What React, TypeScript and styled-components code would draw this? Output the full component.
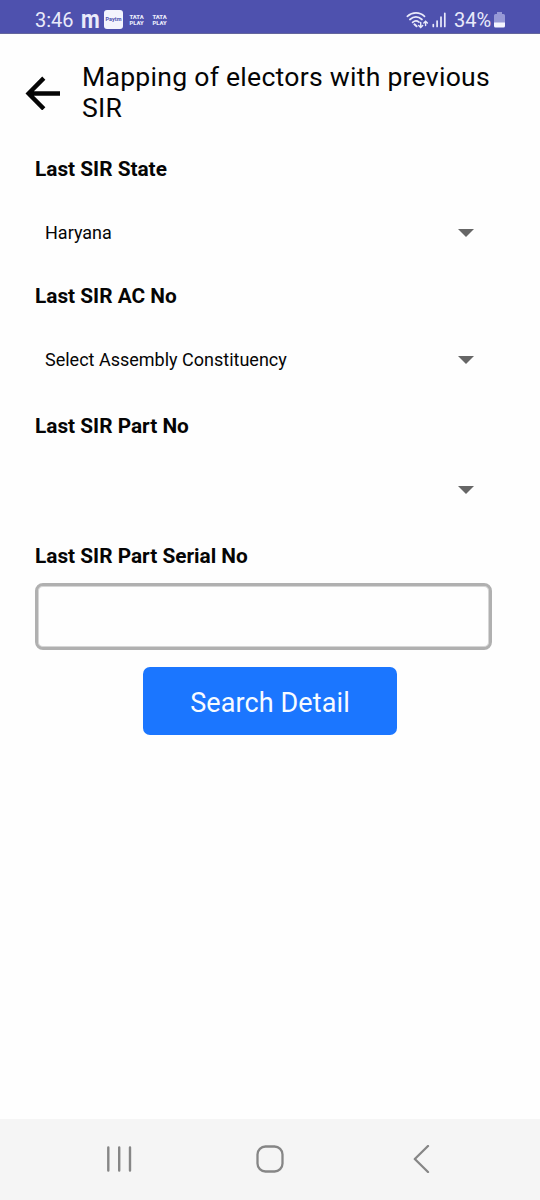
import React from "react";
import styled, { createGlobalStyle } from "styled-components";

const GlobalStyle = createGlobalStyle`
  * { box-sizing: border-box; }
  body { margin: 0; background: #fefefe; }
`;

const Screen = styled.div`
  width: 540px;
  height: 1200px;
  display: flex;
  flex-direction: column;
  overflow: hidden;
  background: #fefefe;
  color: #050505;
  font-family: Roboto, "Liberation Sans", sans-serif;
`;

const StatusBar = styled.header`
  height: 34px;
  flex: none;
  display: flex;
  justify-content: space-between;
  align-items: center;
  padding: 7px 35px 0 35px;
  background: #4e51ae;
  border-bottom: 1px solid #64669c;
  color: #e9eafa;
`;

const StatusGroup = styled.div`
  display: flex;
  align-items: center;
  height: 26px;

  & > * {
    flex: none;
  }
`;

const Clock = styled.span`
  width: 46px;
  font-size: 20px;
  line-height: 26px;
  white-space: nowrap;
`;

const AppMark = styled.span`
  width: 23px;
  font-size: 26px;
  font-weight: 700;
  line-height: 24px;
  height: 26px;
  transform: scaleX(0.83);
  transform-origin: left;
`;

const PaytmBadge = styled.span`
  width: 19px;
  height: 19px;
  margin: 0 6px 1px 0;
  border-radius: 3px;
  background: #f3f4fd;
  color: #4e51ae;
  font-size: 5.5px;
  font-weight: 700;
  line-height: 18px;
  text-align: center;
`;

const TataPlay = styled.span`
  width: 15px;
  margin-right: 8px;
  font-size: 5.8px;
  font-weight: 900;
  line-height: 6px;
  text-align: center;
  white-space: nowrap;
`;

const BatteryText = styled.span`
  width: 37px;
  margin: 0 3px 0 7px;
  font-size: 20px;
  line-height: 26px;
  white-space: nowrap;
`;

const TitleBar = styled.div`
  display: flex;
  align-items: center;
  gap: 22px;
  height: 64px;
  margin: 27px 25px 0;
`;

const Title = styled.h1`
  margin: -2px 0 0;
  flex: 1;
  font-size: 26.6px;
  font-weight: 400;
  line-height: 31px;
  letter-spacing: 0.25px;
`;

const Form = styled.main`
  flex: 1;
  display: flex;
  flex-direction: column;
  padding: 31px 48px 0 35px;
`;

const Field = styled.div<{ $height: number }>`
  height: ${(p) => p.$height}px;
  flex: none;
`;

const Label = styled.label`
  display: block;
  padding-top: 1px;
  font-size: 20.8px;
  font-weight: 700;
  line-height: 25px;
`;

const Select = styled.div`
  display: flex;
  align-items: center;
  justify-content: space-between;
  height: 54px;
  margin-top: 24px;
  padding: 0 18px 0 10px;
  font-size: 18px;
`;

const SelectValue = styled.span`
  padding-bottom: 1px;
`;

const SerialInput = styled.input`
  display: block;
  width: 457px;
  height: 67px;
  margin-top: 14px;
  border: 3px solid #b0b0b0;
  border-radius: 8px;
  box-shadow: inset 0 0 0 1px #d6d6d6;
  background: transparent;
  outline: none;
`;

const SearchButton = styled.button`
  width: 254px;
  height: 68px;
  margin-left: 108px;
  padding: 3px 0 0;
  border: 0;
  border-radius: 7px;
  background: #1b76ff;
  color: #f7fbff;
  font-family: inherit;
  font-size: 27px;
  letter-spacing: 0.1px;
`;

const NavBar = styled.nav`
  height: 81px;
  flex: none;
  display: flex;
  align-items: center;
  justify-content: space-between;
  padding: 0 105px 2px;
  background: #f5f5f5;
`;

const Caret = () => (
  <svg width="16" height="8" viewBox="0 0 16 8">
    <path d="M0 0H16L8 8Z" fill="#666" />
  </svg>
);

function Dropdown({ label, value, height }: { label: string; value: string; height: number }) {
  return (
    <Field $height={height}>
      <Label>{label}</Label>
      <Select>
        <SelectValue>{value}</SelectValue>
        <Caret />
      </Select>
    </Field>
  );
}

export default function App() {
  return (
    <Screen>
      <GlobalStyle />
      <StatusBar>
        <StatusGroup>
          <Clock>3:46</Clock>
          <AppMark>m</AppMark>
          <PaytmBadge>Paytm</PaytmBadge>
          <TataPlay>TATA<br />PLAY</TataPlay>
          <TataPlay>TATA<br />PLAY</TataPlay>
        </StatusGroup>
        <StatusGroup>
          <svg width="41" height="18" viewBox="0 0 41 18" fill="none" stroke="#e9eafa" strokeLinecap="round">
            <path d="M1.3 5.3C6.5.6 13.5.6 18.5 5.3M3.9 8.5C7.7 5.1 12.2 5.1 16 8.5M6.6 11.4C8.7 9.6 11.1 9.6 13 11.2" strokeWidth="1.7" />
            <path d="M8.4 13.3L10.6 15.3" strokeWidth="2" />
            <path d="M14.7 11.5V16M12.7 14.4L14.7 16.4L16.7 14.4M19.6 14.5V10.3M17.8 12L19.6 10.2L21.4 12" strokeWidth="1.4" />
            <path d="M27.3 13.5V15.5M31.1 10V15.5M35 6.2V15.5M38.8 2.3V15.5" strokeWidth="1.7" />
          </svg>
          <BatteryText>34%</BatteryText>
          <svg width="11" height="16" viewBox="0 0 11 16">
            <path d="M3 0H8V2H9.5Q11 2 11 3.5V11H0V3.5Q0 2 1.5 2H3Z" fill="#9799d6" />
            <path d="M0 10.5H11V14Q11 15.5 9.5 15.5H1.5Q0 15.5 0 14Z" fill="#f5f5ff" />
          </svg>
        </StatusGroup>
      </StatusBar>
      <TitleBar>
        <svg width="35" height="34" viewBox="0 0 35 34" fill="none" stroke="#050505" strokeWidth="4.4">
          <path d="M35 17.5H4M18.8 2.1L3.6 17.5L18.8 32.9" />
        </svg>
        <Title>Mapping of electors with previous SIR</Title>
      </TitleBar>
      <Form>
        <Dropdown label="Last SIR State" value="Haryana" height={127} />
        <Dropdown label="Last SIR AC No" value="Select Assembly Constituency" height={130} />
        <Dropdown label="Last SIR Part No" value="" height={130} />
        <Field $height={124}>
          <Label>Last SIR Part Serial No</Label>
          <SerialInput />
        </Field>
        <SearchButton>Search Detail</SearchButton>
      </Form>
      <NavBar>
        <svg width="28" height="28" viewBox="0 0 28 28" stroke="#868686" strokeWidth="2.4" strokeLinecap="round">
          <path d="M3.3 2.5V25.5M14.2 2.5V25.5M25 2.5V25.5" />
        </svg>
        <svg width="28" height="28" viewBox="0 0 28 28" fill="none" stroke="#868686" strokeWidth="2.3">
          <rect x="1.5" y="1.5" width="25" height="25" rx="8" />
        </svg>
        <svg width="28" height="28" viewBox="0 0 28 28" fill="none" stroke="#868686" strokeWidth="2.3" strokeLinecap="round" strokeLinejoin="round">
          <path d="M21 1L7.8 14L21 27" />
        </svg>
      </NavBar>
    </Screen>
  );
}
